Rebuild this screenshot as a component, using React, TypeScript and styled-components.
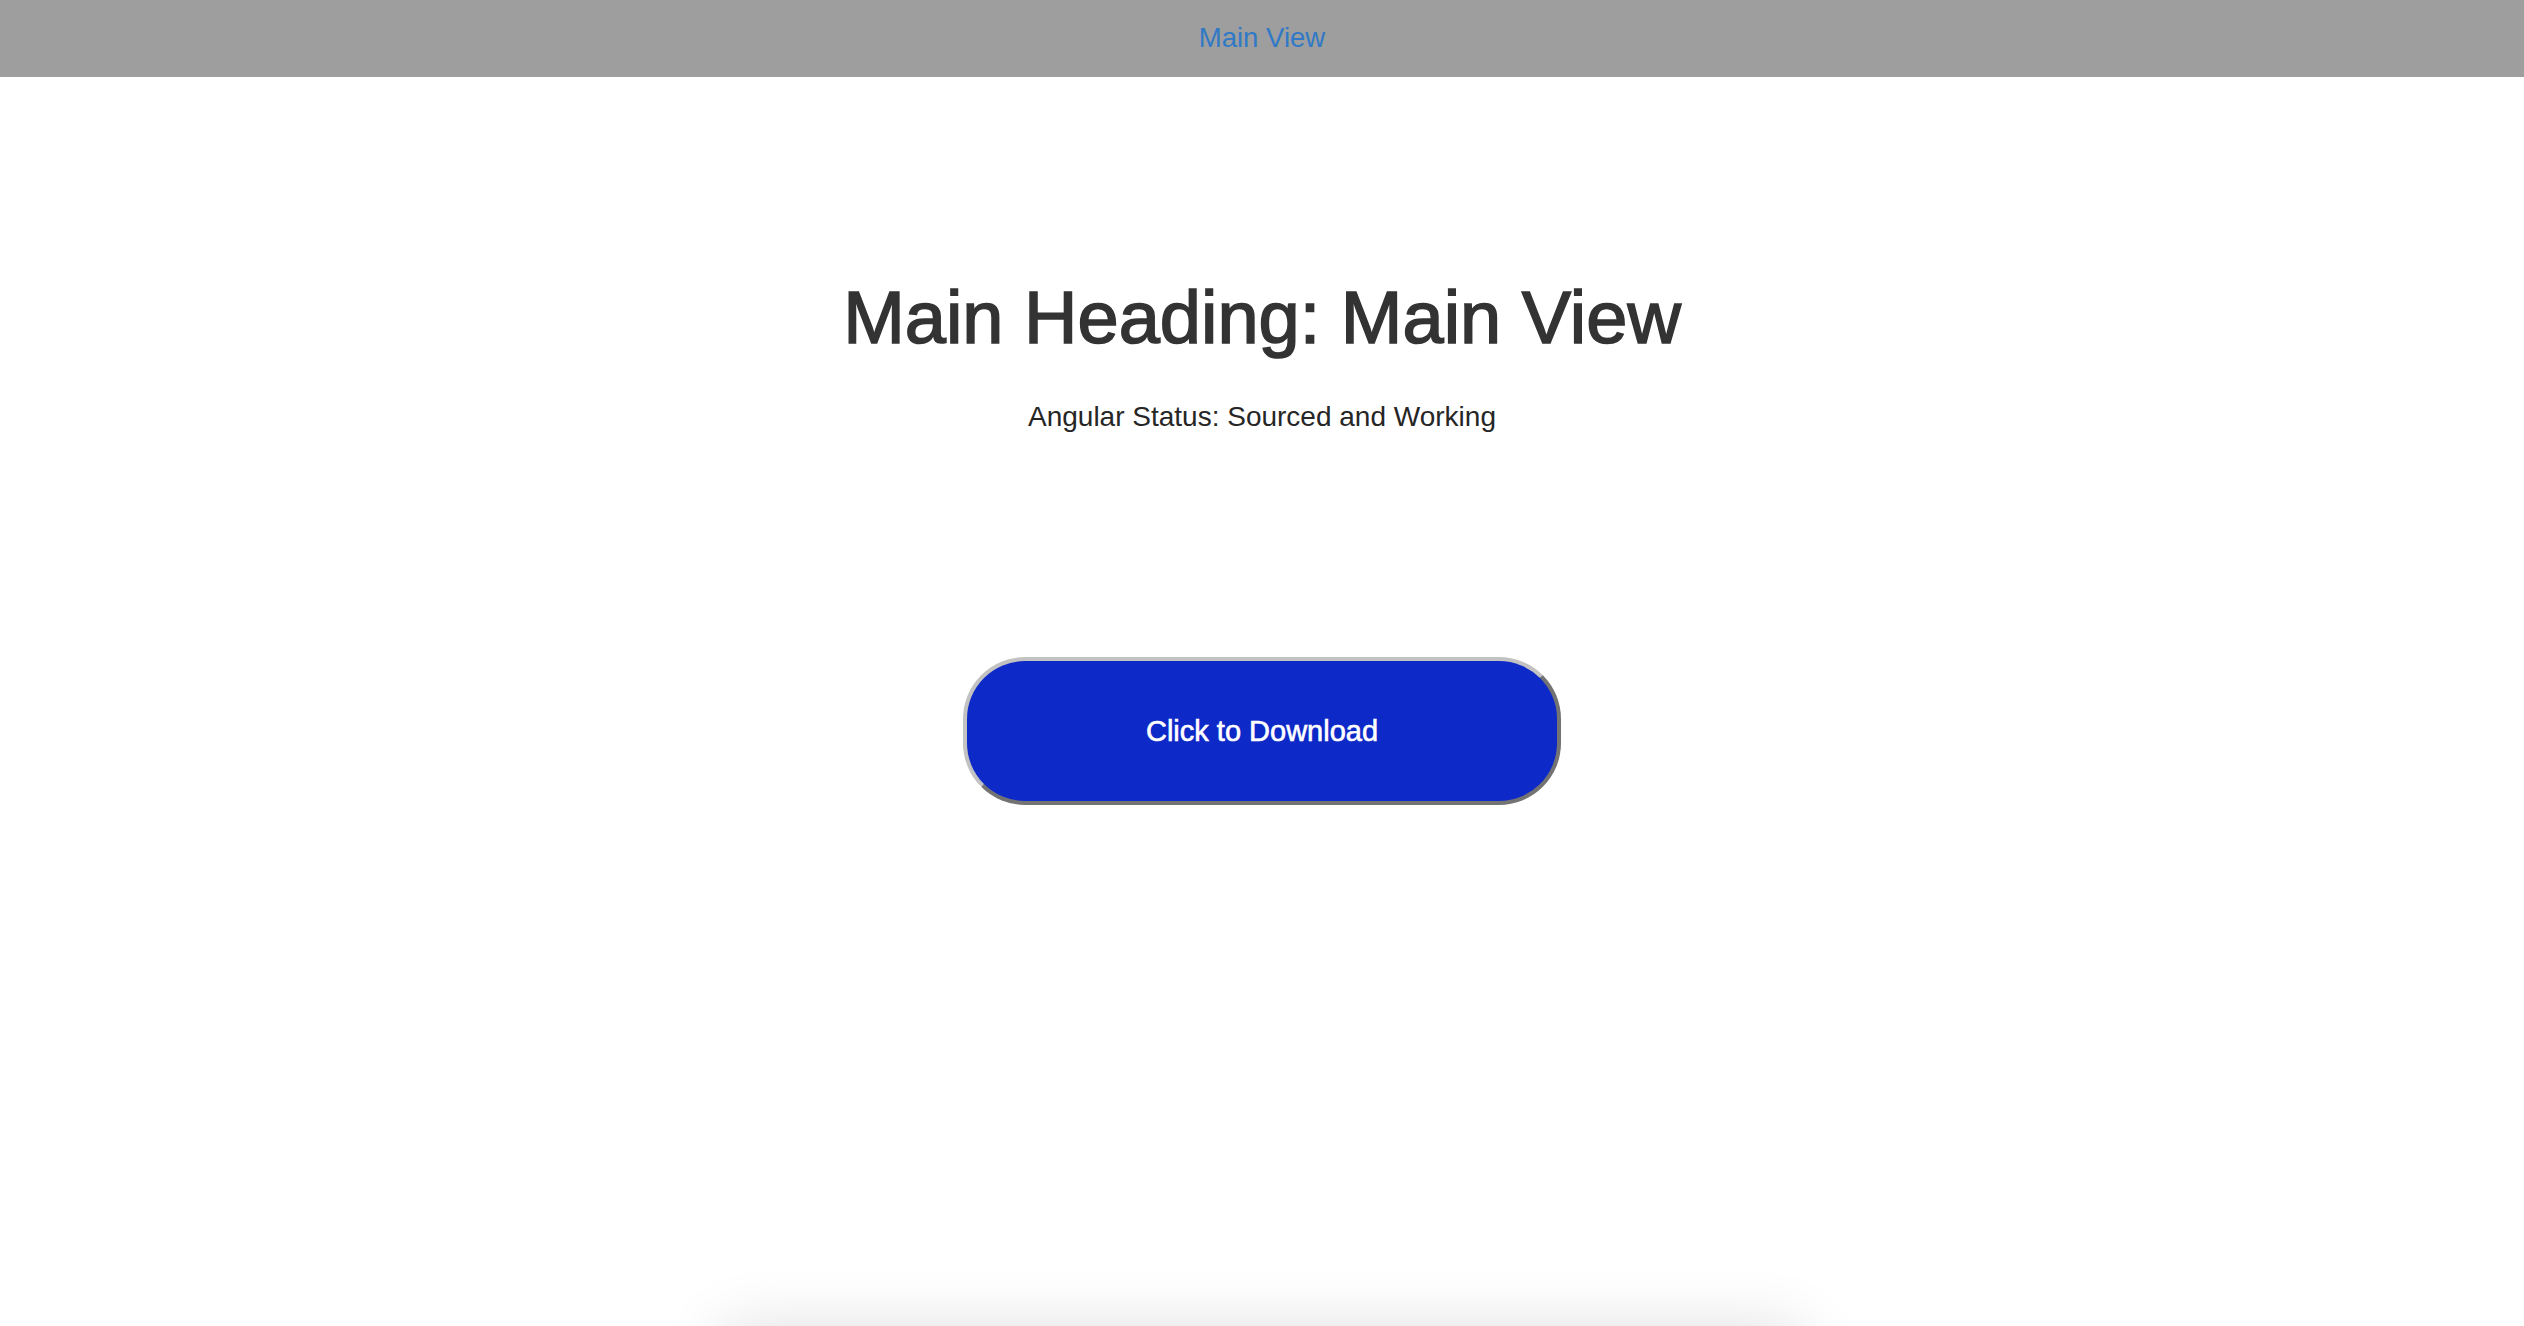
import React from "react";
import styled, { createGlobalStyle } from "styled-components";

const GlobalStyle = createGlobalStyle`
  html, body {
    margin: 0;
    padding: 0;
    background: #ffffff;
    font-family: "Liberation Sans", Arial, Helvetica, sans-serif;
  }
  body {
    overflow: hidden;
  }
`;

const Page = styled.div`
  display: flex;
  flex-direction: column;
  align-items: stretch;
  min-height: 1326px;
`;

const NavBar = styled.nav`
  height: 77px;
  background: #9e9e9e;
  display: flex;
  align-items: center;
  justify-content: center;
`;

const NavLink = styled.a`
  color: #3079c6;
  font-size: 27.5px;
  text-decoration: none;
  line-height: 1;
  margin-top: -1px;
`;

const Main = styled.main`
  display: flex;
  flex-direction: column;
  align-items: center;
  padding-top: 200px;
`;

const Heading = styled.h1`
  margin: 0;
  font-size: 74px;
  line-height: 81px;
  font-weight: 400;
  color: #333333;
  -webkit-text-stroke: 1.6px #333333;
`;

const Status = styled.p`
  margin: 42px 0 0;
  font-size: 28px;
  line-height: 34px;
  color: #262626;
`;

const DownloadButton = styled.button`
  margin-top: 223px;
  width: 598px;
  height: 148px;
  border-radius: 62px;
  border-width: 4px;
  border-style: solid;
  border-color: #c2c2c2 #737373 #737373 #c2c2c2;
  background: #0d29c8;
  color: #ffffff;
  font-family: "Liberation Sans", Arial, Helvetica, sans-serif;
  font-size: 29px;
  -webkit-text-stroke: 0.6px #ffffff;
  cursor: pointer;
  display: flex;
  align-items: center;
  justify-content: center;
`;

const FooterCard = styled.section`
  margin-top: 525px;
  width: 1080px;
  height: 200px;
  background: #ffffff;
  box-shadow: 0 0 60px rgba(0, 0, 0, 0.14);
`;

export default function App() {
  return (
    <>
      <GlobalStyle />
      <Page>
        <NavBar>
          <NavLink href="#">Main View</NavLink>
        </NavBar>
        <Main>
          <Heading>Main Heading: Main View</Heading>
          <Status>Angular Status: Sourced and Working</Status>
          <DownloadButton>Click to Download</DownloadButton>
          <FooterCard />
        </Main>
      </Page>
    </>
  );
}
